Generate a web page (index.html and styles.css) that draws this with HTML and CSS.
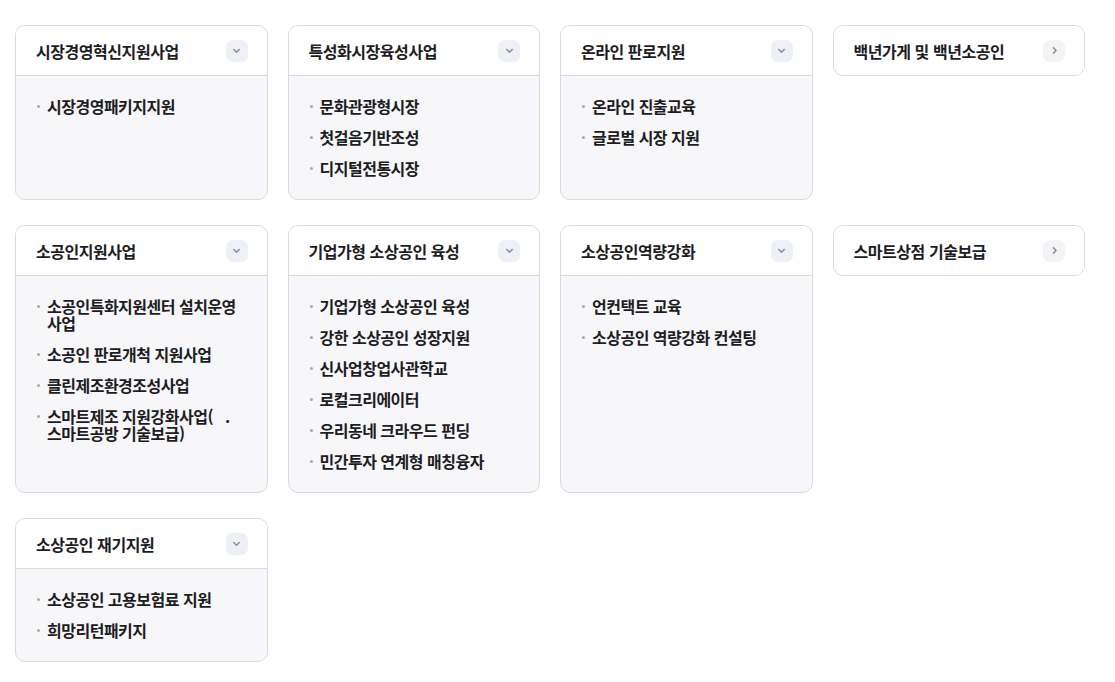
FILE: index.html
```html
<!DOCTYPE html>
<html lang="ko">
<head>
    <meta charset="UTF-8">
    <meta name="viewport" content="width=device-width, initial-scale=1.0">
    <title>소상공인 지원사업</title>
    <link rel="stylesheet" href="styles.css">
</head>
<body>
    <div class="grid">
        <div class="card">
            <div class="card-head">
                <span class="title">시장경영혁신지원사업</span>
                <span class="toggle"><svg viewBox="0 0 10 10"><path d="M2.5 4l2.5 2.5 2.5-2.5"/></svg></span>
            </div>
            <ul class="items">
                <li>시장경영패키지지원</li>
            </ul>
        </div>
        <div class="card">
            <div class="card-head">
                <span class="title">특성화시장육성사업</span>
                <span class="toggle"><svg viewBox="0 0 10 10"><path d="M2.5 4l2.5 2.5 2.5-2.5"/></svg></span>
            </div>
            <ul class="items">
                <li>문화관광형시장</li>
                <li>첫걸음기반조성</li>
                <li>디지털전통시장</li>
            </ul>
        </div>
        <div class="card">
            <div class="card-head">
                <span class="title">온라인 판로지원</span>
                <span class="toggle"><svg viewBox="0 0 10 10"><path d="M2.5 4l2.5 2.5 2.5-2.5"/></svg></span>
            </div>
            <ul class="items">
                <li>온라인 진출교육</li>
                <li>글로벌 시장 지원</li>
            </ul>
        </div>
        <div class="card link">
            <div class="card-head">
                <span class="title">백년가게 및 백년소공인</span>
                <span class="toggle go"><svg viewBox="0 0 10 10"><path d="M4 2.5l2.5 2.5-2.5 2.5"/></svg></span>
            </div>
        </div>

        <div class="card">
            <div class="card-head">
                <span class="title">소공인지원사업</span>
                <span class="toggle"><svg viewBox="0 0 10 10"><path d="M2.5 4l2.5 2.5 2.5-2.5"/></svg></span>
            </div>
            <ul class="items">
                <li>소공인특화지원센터 설치운영 사업</li>
                <li>소공인 판로개척 지원사업</li>
                <li>클린제조환경조성사업</li>
                <li>스마트제조 지원강화사업(&nbsp;&nbsp;&nbsp;.<br>스마트공방 기술보급)</li>
            </ul>
        </div>
        <div class="card">
            <div class="card-head">
                <span class="title">기업가형 소상공인 육성</span>
                <span class="toggle"><svg viewBox="0 0 10 10"><path d="M2.5 4l2.5 2.5 2.5-2.5"/></svg></span>
            </div>
            <ul class="items">
                <li>기업가형 소상공인 육성</li>
                <li>강한 소상공인 성장지원</li>
                <li>신사업창업사관학교</li>
                <li>로컬크리에이터</li>
                <li>우리동네 크라우드 펀딩</li>
                <li>민간투자 연계형 매칭융자</li>
            </ul>
        </div>
        <div class="card">
            <div class="card-head">
                <span class="title">소상공인역량강화</span>
                <span class="toggle"><svg viewBox="0 0 10 10"><path d="M2.5 4l2.5 2.5 2.5-2.5"/></svg></span>
            </div>
            <ul class="items">
                <li>언컨택트 교육</li>
                <li>소상공인 역량강화 컨설팅</li>
            </ul>
        </div>
        <div class="card link">
            <div class="card-head">
                <span class="title">스마트상점 기술보급</span>
                <span class="toggle go"><svg viewBox="0 0 10 10"><path d="M4 2.5l2.5 2.5-2.5 2.5"/></svg></span>
            </div>
        </div>

        <div class="card">
            <div class="card-head">
                <span class="title">소상공인 재기지원</span>
                <span class="toggle"><svg viewBox="0 0 10 10"><path d="M2.5 4l2.5 2.5 2.5-2.5"/></svg></span>
            </div>
            <ul class="items">
                <li>소상공인 고용보험료 지원</li>
                <li>희망리턴패키지</li>
            </ul>
        </div>
    </div>
</body>
</html>
```

FILE: styles.css
```css
body {
    margin: 0;
    padding: 25px 15px;
    background-color: #fff;
    font-family: "Noto Sans CJK KR", "Noto Sans", sans-serif;
    color: #1d1d1f;
}
.grid {
    width: 1070px;
    display: grid;
    grid-template-columns: repeat(4, 1fr);
    gap: 25px 20px;
    align-items: start;
}
.card {
    border: 1px solid #d9d9e4;
    border-radius: 10px;
    overflow: hidden;
    background-color: #f7f7f9;
    display: flex;
    flex-direction: column;
    align-self: stretch;
}
.card.link {
    align-self: start;
    background-color: #fff;
}
.card-head {
    height: 49px;
    padding: 0 19px 0 20px;
    display: flex;
    align-items: center;
    justify-content: space-between;
    background-color: #fff;
    border-bottom: 1px solid #d9d9e4;
}
.card.link .card-head {
    border-bottom: none;
}
.title {
    font-size: 16px;
    font-weight: 700;
    letter-spacing: -0.45px;
}
.toggle {
    width: 22px;
    height: 22px;
    border-radius: 7px;
    background-color: #eef0f8;
    display: flex;
    align-items: center;
    justify-content: center;
}
.toggle.go {
    background-color: #f4f4f6;
}
.toggle svg {
    width: 11px;
    height: 11px;
    fill: none;
    stroke: #8a8a92;
    stroke-width: 1.3;
    stroke-linecap: round;
    stroke-linejoin: round;
}
.items {
    list-style: none;
    margin: 0;
    padding: 22px 20px 22px 20px;
    display: flex;
    flex-direction: column;
    gap: 14px;
}
.items li {
    position: relative;
    padding-left: 11px;
    font-size: 16px;
    font-weight: 700;
    line-height: 17px;
    letter-spacing: -0.5px;
    word-break: keep-all;
}
.items li::before {
    content: "";
    position: absolute;
    left: 1px;
    top: 7px;
    width: 3px;
    height: 3px;
    border-radius: 50%;
    background-color: #a9a9b0;
}
```
